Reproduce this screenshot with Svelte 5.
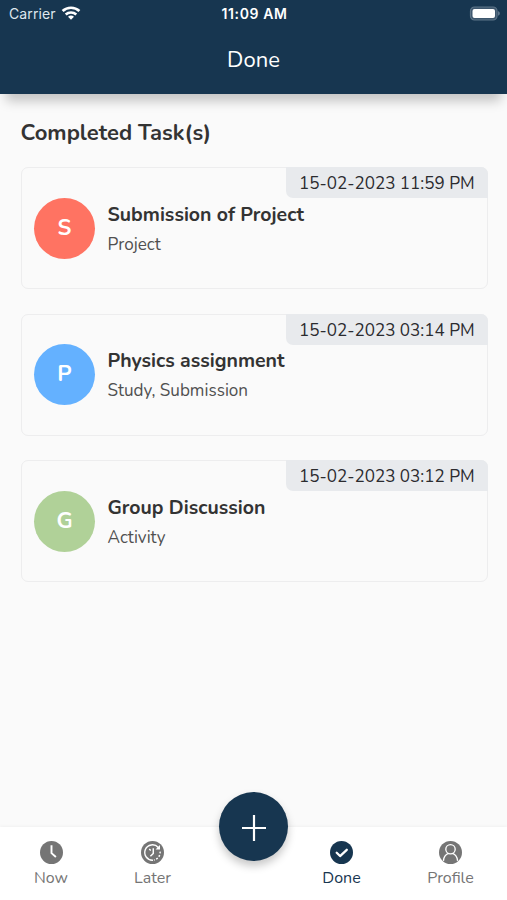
<script>
  const tasks = [
    { title: 'Submission of Project', tags: 'Project', due: '15-02-2023 11:59 PM', color: 'coral' },
    { title: 'Physics assignment', tags: 'Study, Submission', due: '15-02-2023 03:14 PM', color: 'blue' },
    { title: 'Group Discussion', tags: 'Activity', due: '15-02-2023 03:12 PM', color: 'green' },
  ];

  let active = $state('Done');
</script>

<div class="app">
  <header>
    <div class="status">
      <span class="carrier">
        <span>Carrier</span>
        <svg width="20" height="16" viewBox="0 0 20 16" fill="none" stroke="#fff">
          <path d="M1.6 6.1a12.2 12.2 0 0 1 16.8 0" stroke-width="2.7" />
          <path d="M4.7 9.5a7.7 7.7 0 0 1 10.6 0" stroke-width="2.5" />
          <path d="M7 11.8a4.4 4.4 0 0 1 6 0L10 14.8z" fill="#fff" stroke="none" />
        </svg>
      </span>
      <span class="clock">11:09 AM</span>
      <svg class="battery" width="31" height="15" viewBox="0 0 31 15">
        <rect x="1.5" y="1" width="26.5" height="13" rx="4" fill="#3d566d" stroke="#5d7488" stroke-width="1.2" />
        <rect x="3.5" y="3" width="22.5" height="9" rx="2" fill="#fff" />
        <path d="M29.2 5.3c2 .6 2 3.8 0 4.4z" fill="#71869a" />
      </svg>
    </div>
    <h1>Done</h1>
  </header>

  <main>
    <h2>Completed Task(s)</h2>
    {#each tasks as task}
      <article>
        <div class="avatar {task.color}">{task.title[0]}</div>
        <div class="info">
          <h3>{task.title}</h3>
          <p>{task.tags}</p>
        </div>
        <time>{task.due}</time>
      </article>
    {/each}
  </main>

  <nav>
    <button class:active={active === 'Now'} onclick={() => (active = 'Now')}>
      <svg viewBox="0 0 24 24">
        <circle cx="12" cy="12" r="12" fill="currentColor" />
        <path d="M12 4.5v8.2l4.6 4" fill="none" stroke="#fff" stroke-width="2" />
      </svg>
      <span>Now</span>
    </button>
    <button class:active={active === 'Later'} onclick={() => (active = 'Later')}>
      <svg viewBox="0 0 24 24" fill="none" stroke="#fff" stroke-width="1.5">
        <circle cx="12" cy="12" r="12" fill="currentColor" stroke="none" />
        <path d="M12.5 20A8 8 0 1 1 18 6.8" />
        <path d="M19.8 4.2v4.6h-4.6z" fill="#fff" stroke="none" />
        <path d="M19.9 11A8 8 0 0 1 13.5 19.8" stroke-dasharray="2 1.7" />
        <path d="M12.8 7.5v5.5l-3 3M8.6 8.4l1.6 1.6" />
      </svg>
      <span>Later</span>
    </button>
    <div class="slot">
      <button class="add" aria-label="Add task">
        <svg viewBox="0 0 26 26" stroke="#fff" stroke-width="2.2">
          <path d="M13 0v26M1 13h24" />
        </svg>
      </button>
    </div>
    <button class:active={active === 'Done'} onclick={() => (active = 'Done')}>
      <svg viewBox="0 0 24 24">
        <circle cx="12" cy="12" r="12" fill="currentColor" />
        <path d="M7 12.3l3.5 3.4 7-6.5" fill="none" stroke="#fff" stroke-width="2.4" stroke-linecap="round" stroke-linejoin="round" />
      </svg>
      <span>Done</span>
    </button>
    <button class:active={active === 'Profile'} onclick={() => (active = 'Profile')}>
      <svg viewBox="0 0 24 24" fill="none" stroke="#fff" stroke-width="1.4">
        <circle cx="12" cy="12" r="12" fill="currentColor" stroke="none" />
        <circle cx="12" cy="8.6" r="4.9" />
        <path d="M4.6 20.7c.4-4.3 2.5-6.7 5.2-7.7M19.4 20.7c-.4-4.3-2.5-6.7-5.2-7.7" />
      </svg>
      <span>Profile</span>
    </button>
  </nav>
</div>

<style>
  :global(body) {
    margin: 0;
    background: #fafafa;
  }

  .app {
    display: flex;
    flex-direction: column;
    height: 900px;
    overflow: hidden;
    background: #fafafa;
    color: #333;
    font-family: Nunito, Lato, sans-serif;
  }

  header {
    flex: none;
    height: 94px;
    background: #173650;
    color: #fff;
    box-shadow: 0 13px 11px -6px rgba(0, 0, 0, 0.22);
  }

  .status {
    display: grid;
    grid-template-columns: 1fr auto 1fr;
    align-items: center;
    height: 27px;
    padding: 0 7px 0 9px;
    font-family: Inter, sans-serif;
    font-size: 14px;
  }

  .carrier {
    display: flex;
    align-items: center;
    gap: 5px;
    color: #dfe7ee;
    letter-spacing: 0.1px;
  }

  .carrier svg {
    margin-top: -2px;
  }

  .clock {
    font-weight: 600;
    letter-spacing: 0.6px;
  }

  .battery {
    justify-self: end;
    margin-top: -1px;
  }

  h1 {
    margin: 19px 0 0;
    font-size: 22px;
    font-weight: 400;
    line-height: 28px;
    text-align: center;
  }

  main {
    flex: 1;
    padding: 25px 19.5px 0 20.5px;
  }

  h2 {
    margin: 0 0 20px;
    font-size: 22px;
    line-height: 28px;
  }

  article {
    position: relative;
    display: flex;
    box-sizing: border-box;
    height: 122px;
    margin-bottom: 24.6px;
    padding: 29.5px 12.5px;
    border: 1px solid #ededee;
    border-radius: 7px;
  }

  .avatar {
    flex: none;
    width: 61px;
    height: 61px;
    margin-right: 12.5px;
    border-radius: 50%;
    color: #fff;
    font-size: 22px;
    font-weight: 700;
    line-height: 61px;
    text-align: center;
  }

  .coral {
    background: #ff7362;
  }

  .blue {
    background: #64b1ff;
  }

  .green {
    background: #b0d198;
  }

  h3 {
    margin: 3px 0 4px;
    font-size: 19.5px;
    line-height: 27px;
  }

  p {
    margin: 0;
    color: #505050;
    font-size: 17.1px;
    line-height: 25px;
  }

  time {
    position: absolute;
    top: -1px;
    right: -1px;
    box-sizing: border-box;
    width: 201.5px;
    height: 31px;
    border-radius: 0 7px 0 7px;
    background: #e8eaed;
    color: #2b2b2f;
    font-size: 17.1px;
    line-height: 33px;
    text-align: center;
  }

  nav {
    display: grid;
    grid-template-columns: 102px 101px 84px 109px 109px;
    flex: none;
    height: 73px;
    background: #fff;
    box-shadow: 0 -1px 3px rgba(0, 0, 0, 0.04);
  }

  button {
    display: flex;
    flex-direction: column;
    align-items: center;
    padding: 14px 0 0;
    border: 0;
    background: none;
    color: #757575;
    font: inherit;
    font-size: 16px;
    line-height: 20px;
    cursor: pointer;
  }

  button svg {
    width: 23px;
    height: 23px;
    margin-bottom: 4px;
  }

  .active {
    color: #173650;
  }

  .slot {
    display: flex;
    justify-content: center;
  }

  .add {
    flex: none;
    justify-content: center;
    width: 69px;
    height: 69px;
    margin: -35px -8px 0 9px;
    padding: 0;
    border-radius: 50%;
    background: #173650;
    box-shadow: 0 5px 9px rgba(0, 0, 0, 0.22);
  }

  .add svg {
    width: 26px;
    height: 26px;
    margin: 2px 0 0;
  }
</style>
